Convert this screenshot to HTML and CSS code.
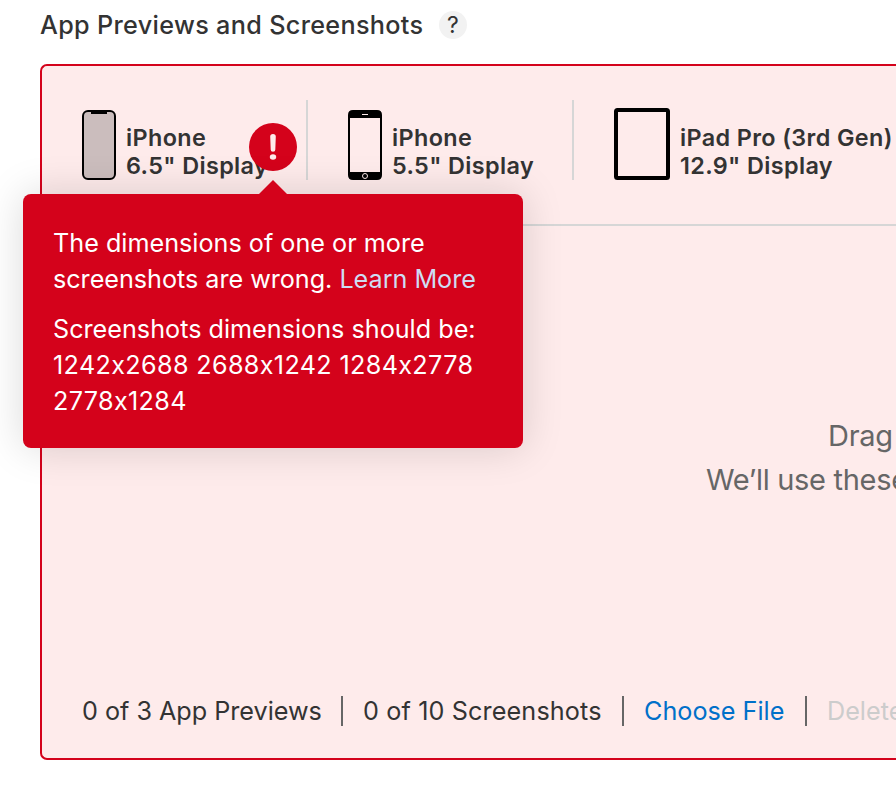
FILE: index.html
```html
<!DOCTYPE html>
<html lang="en">
<head>
<meta charset="utf-8">
<title>App Previews and Screenshots</title>
<link rel="stylesheet" href="styles.css">
</head>
<body>
<header class="heading">
  <h1 class="title">App Previews and Screenshots</h1>
  <span class="help">?</span>
</header>
<main class="panel">
  <nav class="tabs">
    <div class="tab tab-first">
      <svg class="phone" width="34" height="70" viewBox="0 0 34 70">
        <rect x="1" y="1" width="32" height="68" rx="5" fill="#cbbdbd" stroke="#000" stroke-width="2"/>
        <path d="M9 1h16v3h-16z"/>
      </svg>
      <div class="label"><span class="l1">iPhone</span><span class="l2">6.5" Display</span></div>
      <div class="alert">
        <svg class="badge" width="48" height="48" viewBox="0 0 48 48">
          <circle cx="24" cy="24" r="24" fill="#d4021b"/>
          <path d="M21.200 13.500a2.800 2.600 0 0 1 5.600 0l-.5 13.300a2.300 2 0 0 1-4.600 0z" fill="#feebeb"/>
          <ellipse cx="24" cy="34" rx="3.200" ry="2.800" fill="#feebeb"/>
        </svg>
        <div class="tooltip">
          <p class="para"><span class="t1">The dimensions of one or more</span><br><span class="t2">screenshots are wrong. <a class="learn">Learn More</a></span></p>
          <p class="para"><span class="t3">Screenshots dimensions should be:</span><br><span class="t4">1242x2688 2688x1242 1284x2778</span><br><span class="t4">2778x1284</span></p>
        </div>
      </div>
    </div>
    <div class="tab">
      <svg class="phone" width="34" height="70" viewBox="0 0 34 70">
        <path fill-rule="evenodd" d="M5 0h24q5 0 5 5v60q0 5-5 5H5q-5 0-5-5V5q0-5 5-5zM2 8v54h30V8z"/>
        <path d="M14 4.500h6" stroke="#feebeb" stroke-width="1"/>
        <circle cx="17" cy="66" r="2.500" fill="none" stroke="#feebeb" stroke-width="1"/>
      </svg>
      <div class="label"><span class="l1">iPhone</span><span class="l2">5.5" Display</span></div>
    </div>
    <div class="tab tab-pad">
      <svg class="pad" width="56" height="72" viewBox="0 0 56 72">
        <rect x="2" y="2" width="52" height="68" rx="1.500" fill="none" stroke="#000" stroke-width="4"/>
      </svg>
      <div class="label"><span class="l1">iPad Pro (3rd Gen)</span><span class="l2">12.9" Display</span></div>
    </div>
  </nav>
  <section class="drop">
    <p class="d1">Drag</p>
    <p class="d2">We’ll use these</p>
  </section>
  <footer class="bar">
    <span class="f1">0 of 3 App Previews</span>
    <span class="f2">0 of 10 Screenshots</span>
    <a class="f3">Choose File</a>
    <span class="f4">Delete</span>
  </footer>
</main>
</body>
</html>
```
FILE: styles.css
```css
* { box-sizing: border-box; }
body {
  margin: 0;
  height: 796px;
  overflow: hidden;
  background: #fff;
  color: #333;
  font-family: Inter, "Liberation Sans", sans-serif;
  font-size: 25.2px;
  font-feature-settings: "calt" 0;
  white-space: nowrap;
}
h1, p { margin: 0; font-weight: inherit; }
.heading { display: flex; align-items: center; height: 50px; padding-left: 40px; }
.title { width: 399px; font-size: 25.2px; font-weight: 500; letter-spacing: .33px; }
.help {
  width: 28px; height: 28px; border-radius: 50%;
  background: #f2f2f2; font-size: 23px; line-height: 28px; text-align: center;
}
.panel {
  display: flex; flex-direction: column;
  width: 856px; height: 696px; margin: 14px 0 0 40px;
  background: #feebeb; border: 2px solid #d4021b; border-right: 0; border-radius: 7px 0 0 7px;
}
.tabs { display: flex; align-items: flex-start; height: 160px; padding-top: 34px; border-bottom: 2px solid #d6d6d6; }
.tab {
  position: relative; display: flex; flex: none; gap: 10px; width: 266px; height: 80px;
  padding: 10px 0 0 40px; border-right: 2px solid #d6d6d6;
}
.tab-pad { flex: 1; padding-top: 8px; border-right: 0; }
.tab-pad .label { padding-top: 16px; }
.phone, .pad { flex: none; }
.label { padding-top: 14px; font-size: 23.4px; line-height: 28px; font-weight: 600; letter-spacing: .37px; }
.label span { display: block; }
.alert { position: absolute; left: 207px; top: 23px; width: 48px; height: 48px; z-index: 2; }
.badge { display: block; }
.tooltip {
  position: absolute; left: -226px; top: 71px; width: 500px; height: 254px;
  padding: 31px 31px 0 30px; border-radius: 8px; background: #d4021b; color: #fff;
  line-height: 36px; box-shadow: 0 0 40px rgba(0, 0, 0, .15);
}
.tooltip::before {
  content: ""; position: absolute; left: 236px; top: -14px;
  border: 14px solid transparent; border-top: 0; border-bottom-color: #d4021b;
}
.para + .para { margin-top: 14px; }
.t2 { letter-spacing: -.03px; }
.t4 { letter-spacing: .34px; }
.learn { color: #cfdcf2; }
.drop { flex: 1; overflow: hidden; padding: 188px 0 0 664px; font-size: 29px; line-height: 44px; color: #666; letter-spacing: -.3px; }
.d1 { padding-left: 122px; }
.bar { display: flex; align-items: center; height: 30px; margin: 0 0 32px 40px; overflow: hidden; }
.f1, .f2, .f3 { flex: none; height: 30px; line-height: 30px; border-right: 2px solid #666; margin-right: 20px; }
.f1 { width: 261px; letter-spacing: -.02px; }
.f2 { width: 261px; letter-spacing: .13px; }
.f3 { width: 163px; color: #0070c9; }
.f4 { color: #ccc; }
```
